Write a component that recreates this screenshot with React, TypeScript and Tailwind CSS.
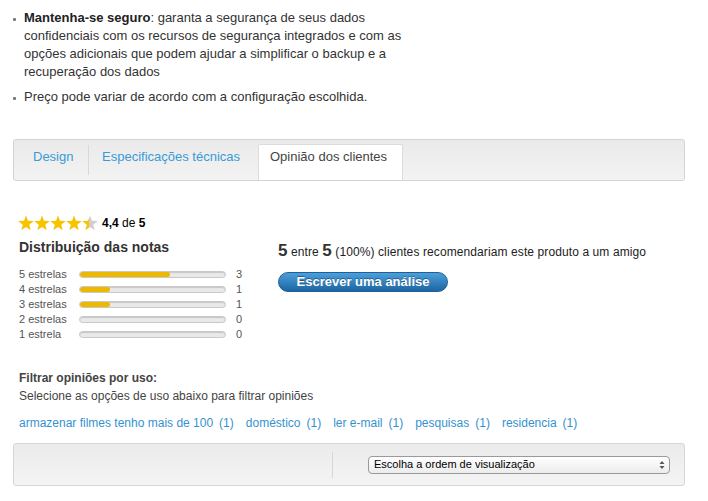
import React from "react";

const font = { fontFamily: '"Liberation Sans", Arial, Helvetica, sans-serif' };

function Star({ fill, id }: { fill: number; id: string }) {
  return (
    <svg width="16" height="16" viewBox="0 0 16 16">
      <defs>
        <linearGradient id={id} x1="0" y1="0" x2="1" y2="0">
          <stop offset={`${fill * 100}%`} stopColor="#f6c400" />
          <stop offset={`${fill * 100}%`} stopColor="#cfcfcf" />
        </linearGradient>
      </defs>
      <polygon
        points="8,0.4 10,5.85 15.8,6.07 11.23,9.65 12.82,15.23 8,12 3.18,15.23 4.77,9.65 0.2,6.07 6,5.85"
        fill={`url(#${id})`}
      />
    </svg>
  );
}

const rows = [
  { label: "5 estrelas", count: 3, pct: 62 },
  { label: "4 estrelas", count: 1, pct: 21 },
  { label: "3 estrelas", count: 1, pct: 21 },
  { label: "2 estrelas", count: 0, pct: 0 },
  { label: "1 estrela", count: 0, pct: 0 },
];

const filters = [
  "armazenar filmes tenho mais de 100",
  "doméstico",
  "ler e-mail",
  "pesquisas",
  "residencia",
];

export default function App() {
  return (
    <div className="w-[708px] h-[501px] bg-white overflow-hidden" style={font}>
      {/* bullets */}
      <ul className="pt-[9px] pl-[13px] text-[13px] leading-[18px] text-[#333]">
        <li className="flex">
          <span className="w-[3px] h-[3px] rounded-[1px] bg-[#777] mt-[9px] shrink-0" />
          <span className="ml-[8px]">
            <b className="text-[#222]">Mantenha-se seguro</b>: garanta a segurança de seus dados
            <br />
            confidenciais com os recursos de segurança integrados e com as
            <br />
            opções adicionais que podem ajudar a simplificar o backup e a
            <br />
            recuperação dos dados
          </span>
        </li>
        <li className="flex mt-[7px]">
          <span className="w-[3px] h-[3px] rounded-[1px] bg-[#777] mt-[9px] shrink-0" />
          <span className="ml-[8px]">Preço pode variar de acordo com a configuração escolhida.</span>
        </li>
      </ul>

      {/* tabs */}
      <div className="mt-[33px] ml-[13px] w-[672px] h-[42px] border border-[#d3d3d3] rounded-[3px] bg-gradient-to-b from-[#eaeaea] to-[#f3f3f3] flex text-[13px] leading-[16px]">
        <div className="w-[74px] pl-[19px] pt-[9px] text-[#3a9ad6]">Design</div>
        <div className="w-px h-[30px] self-center bg-[#d9d9d9]" />
        <div className="w-[169px] pl-[13px] pt-[9px] text-[#3a9ad6]">Especificações técnicas</div>
        <div className="w-[145px] mt-[4px] bg-white border-t border-l border-r border-[#dcdcdc] rounded-t-[2px] pl-[11px] pt-[4px] text-[#444]">
          Opinião dos clientes
        </div>
      </div>

      {/* rating */}
      <div className="mt-[34px] pl-[18px] flex items-center h-[16px]">
        <div className="flex">
          <Star fill={1} id="s1" />
          <Star fill={1} id="s2" />
          <Star fill={1} id="s3" />
          <Star fill={1} id="s4" />
          <Star fill={0.45} id="s5" />
        </div>
        <span className="ml-[4px] text-[12px] text-black">
          <b>4,4</b> de <b>5</b>
        </span>
      </div>

      <div className="mt-[7px] flex">
        <div className="pl-[19px] w-[278px]">
          <div className="text-[14px] leading-[18px] font-bold text-[#333]">Distribuição das notas</div>
          <div className="mt-[11px]">
            {rows.map((r) => (
              <div key={r.label} className="flex items-center h-[15px] text-[11px] text-[#555]">
                <span className="w-[60px]">{r.label}</span>
                <div className="w-[147px] h-[7px] rounded-full bg-[#e9e9e9] border border-[#c9c9c9] shadow-[inset_0_1px_1px_rgba(0,0,0,0.15)] overflow-hidden">
                  <div className="h-full bg-[#ecb800] rounded-full" style={{ width: `${r.pct}%` }} />
                </div>
                <span className="ml-[10px]">{r.count}</span>
              </div>
            ))}
          </div>
        </div>
        <div className="pt-[3px]">
          <div className="text-[12px] leading-[20px] text-[#222] tracking-[0.1px]">
            <b className="text-[17px] text-[#333]">5</b> entre <b className="text-[17px] text-[#333]">5</b> (100%) clientes recomendariam este produto a um amigo
          </div>
          <button className="mt-[10px] w-[170px] h-[20px] rounded-full bg-gradient-to-b from-[#4c9fda] to-[#1b66a3] border border-[#1d609a] text-white font-bold text-[13px] leading-[18px] [text-shadow:0_-1px_0_rgba(0,0,0,0.35)]">
            Escrever uma análise
          </button>
        </div>
      </div>

      {/* filters */}
      <div className="mt-[27px] pl-[19px] text-[12px] leading-[18px]">
        <div className="font-bold text-[#444]">Filtrar opiniões por uso:</div>
        <div className="text-[#444]">Selecione as opções de uso abaixo para filtrar opiniões</div>
        <div className="mt-[9px] flex gap-[12px] text-[#3592d0]">
          {filters.map((f) => (
            <span key={f} className="flex gap-[6px]">
              <span>{f}</span>
              <span>(1)</span>
            </span>
          ))}
        </div>
      </div>

      {/* sort bar */}
      <div className="mt-[11px] ml-[13px] w-[672px] h-[43px] border border-[#d6d6d6] rounded-[3px] bg-gradient-to-b from-[#ebebeb] to-[#f4f4f4] flex items-center">
        <div className="ml-[318px] w-px h-[26px] bg-[#d6d6d6]" />
        <div className="ml-[35px] w-[302px] h-[18px] rounded-[4px] border border-[#9a9a9a] bg-gradient-to-b from-white to-[#ececec] flex items-center justify-between pl-[5px] pr-[4px] text-[11px] text-black">
          <span>Escolha a ordem de visualização</span>
          <svg width="6" height="10" viewBox="0 0 6 10">
            <polygon points="3,1 5.5,4 0.5,4" fill="#555" />
            <polygon points="3,9 5.5,6 0.5,6" fill="#555" />
          </svg>
        </div>
      </div>
    </div>
  );
}
